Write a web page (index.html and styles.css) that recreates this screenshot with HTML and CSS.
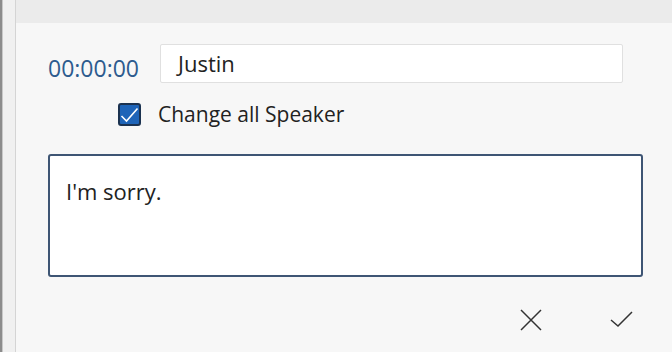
FILE: index.html
```html
<!DOCTYPE html>
<html>
<head>
<meta charset="utf-8">
<link rel="stylesheet" href="styles.css">
</head>
<body>
<div class="app">
  <div class="rail"><div class="rail-dark"></div><div class="rail-light"></div></div>
  <div class="panel">
    <div class="topbar"></div>
    <div class="content">
      <div class="row">
        <span class="time">00:00:00</span>
        <div class="name-input">Justin</div>
      </div>
      <div class="check-row">
        <span class="checkbox">
          <svg width="19" height="19" viewBox="0 0 19 19"><path d="M1.5 11 L6.5 16 L17.5 3.5" fill="none" stroke="#fff" stroke-width="1.6"/></svg>
        </span>
        <span class="check-label">Change all Speaker</span>
      </div>
      <div class="textbox">I'm sorry.</div>
      <div class="actions">
        <span class="action">
          <svg width="24" height="24" viewBox="0 0 24 24"><path d="M2 2 L22 22 M22 2 L2 22" stroke="#333" stroke-width="1.5" fill="none"/></svg>
        </span>
        <span class="action">
          <svg width="24" height="24" viewBox="0 0 24 24"><path d="M1 12 L8 18 L22 4" stroke="#333" stroke-width="1.5" fill="none"/></svg>
        </span>
      </div>
    </div>
  </div>
</div>
</body>
</html>
```
FILE: styles.css
```css
html, body { margin: 0; padding: 0; }
body {
  width: 672px; height: 352px; overflow: hidden;
  font-family: "Open Sans", "Noto Sans", sans-serif;
  background: #f7f7f7;
}
.app { display: flex; height: 352px; }
.rail { display: flex; width: 16px; flex: none; }
.rail-dark { width: 2px; background: #8c8c8c; }
.rail-light { width: 12px; background: #f0f0f0; border-left: 1px solid #c8c8c8; border-right: 1px solid #d4d4d4; }
.panel { flex: 1; display: flex; flex-direction: column; background: #f7f7f7; }
.topbar { height: 23px; background: #ebebeb; }
.content { padding: 21px 29px 0 32px; display: flex; flex-direction: column; }
.row { display: flex; align-items: center; height: 39px; margin-right: 20px; }
.time { color: #2d5b8e; font-size: 23px; width: 112px; flex: none; padding-top: 9px; line-height: 30px; }
.name-input {
  flex: 1; height: 39px; box-sizing: border-box; background: #fff;
  border: 1px solid #e0e0e0; border-radius: 2px;
  padding: 0 17px; font-size: 22px; color: #222; line-height: 36px;
}
.check-row { display: flex; align-items: center; height: 23px; margin: 20px 0 0 70px; }
.checkbox {
  width: 23px; height: 23px; box-sizing: border-box; background: #1e64b8;
  border: 2px solid #1b3250; border-radius: 3px;
  display: flex; align-items: center; justify-content: center;
}
.check-label { margin-left: 17px; font-size: 21px; color: #222; line-height: 23px; }
.textbox {
  margin-top: 28px; height: 123px; box-sizing: border-box; background: #fff;
  border: 2px solid #3e5574; border-radius: 3px;
  padding: 20px 16px; font-size: 22px; color: #222; line-height: 30px;
}
.actions { display: flex; justify-content: flex-end; gap: 67px; margin-top: 31px; padding-right: 9px; }
.action { width: 24px; height: 24px; display: flex; }
```
